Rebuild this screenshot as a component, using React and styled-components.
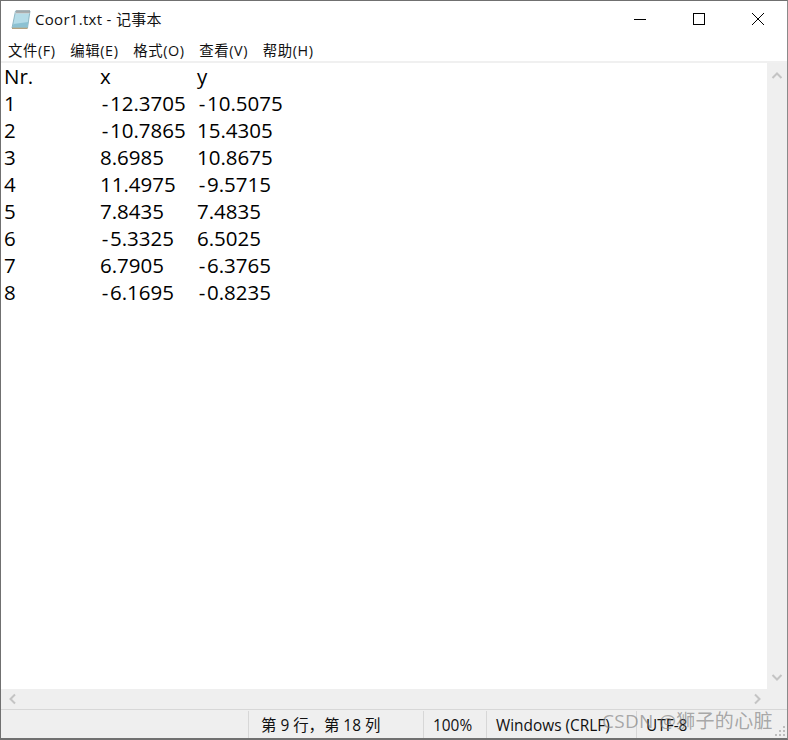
import React from 'react';
import styled, { createGlobalStyle } from 'styled-components';

const GlobalStyle = createGlobalStyle`
  html, body {
    margin: 0;
    padding: 0;
    background: #fff;
  }
`;

const UI_FONT = `"Open Sans", "Noto Sans CJK SC", sans-serif`;

const Win = styled.div`
  width: 788px;
  height: 740px;
  box-sizing: border-box;
  border-top: 1px solid #707070;
  border-left: 1px solid #707070;
  border-right: 1px solid #8a8a8a;
  border-bottom: 2px solid #707070;
  display: flex;
  flex-direction: column;
  background: #fff;
  font-family: ${UI_FONT};
  position: relative;
  overflow: hidden;
`;

const TitleBar = styled.div`
  height: 37px;
  display: flex;
  align-items: center;
  padding: 0 0 2px 10px;
  box-sizing: border-box;
  flex: none;
`;

const Title = styled.div`
  margin-left: 4px;
  font-size: 15px;
  letter-spacing: 0.3px;
  color: #111;
  flex: 1;
`;

const WinButton = styled.div`
  width: 59px;
  height: 35px;
  display: flex;
  align-items: center;
  justify-content: center;
`;

const MenuBar = styled.div`
  height: 25px;
  display: flex;
  align-items: center;
  padding-left: 7px;
  box-sizing: border-box;
  gap: 14.6px;
  flex: none;
  border-bottom: 2px solid #f0f0f0;
`;

const MenuItem = styled.span`
  font-size: 14.4px;
  letter-spacing: 0.6px;
  color: #111;
`;

const Middle = styled.div`
  flex: 1;
  display: flex;
  min-height: 0;
`;

const Editor = styled.div`
  flex: 1;
  padding: 0 0 0 3px;
  font-size: 20.5px;
  color: #000;
`;

const Row = styled.div`
  display: grid;
  grid-template-columns: 96px 97px auto;
  height: 27px;
  line-height: 27px;
  white-space: pre;
`;

const Minus = styled.span`
  display: inline-block;
  width: 10px;
  text-align: center;
`;

const VScroll = styled.div`
  width: 20px;
  background: #efefef;
  display: flex;
  flex-direction: column;
  justify-content: space-between;
  align-items: center;
  padding: 7px 0 6px;
  flex: none;
`;

const HScroll = styled.div`
  height: 20px;
  background: #efefef;
  display: flex;
  justify-content: space-between;
  align-items: center;
  padding: 0 24px 0 6px;
  flex: none;
`;

const StatusBar = styled.div`
  height: 27px;
  background: #efefef;
  border-top: 1px solid #d7d7d7;
  display: flex;
  flex: none;
  font-size: 15.4px;
  color: #111;
  padding-top: 1px;
`;

const StatusCell = styled.div`
  width: ${p => p.$w}px;
  box-sizing: border-box;
  border-left: ${p => (p.$first ? 'none' : '1px solid #d7d7d7')};
  padding-left: ${p => p.$pad || 9}px;
  line-height: 30px;
  white-space: pre;
  overflow: hidden;
`;

const Grip = styled.svg`
  position: absolute;
  right: 1px;
  bottom: 1px;
`;

const Watermark = styled.div`
  position: absolute;
  left: 601px;
  top: 705px;
  font-size: 19px;
  color: rgba(120, 120, 120, 0.62);
  white-space: pre;
  letter-spacing: 0.3px;
`;

const Chevron = ({ d }) => (
  <svg width="12" height="12" viewBox="0 0 12 12">
    <path d={d} fill="none" stroke="#c4c4c4" strokeWidth="2" />
  </svg>
);

const NotepadIcon = () => (
  <svg width="20" height="20" viewBox="0 0 20 20">
    <path d="M4.5 2 L19 2 L16.5 19 L1 19 Z" fill="#b5dce8" stroke="#7ba8b8" strokeWidth="0.8" />
    <path d="M2.5 15 L17.3 13 L16.5 18.6 L1.5 18.6 Z" fill="#8cc1d2" />
    <path d="M1 19.3 L16.5 19.3" stroke="#b39b74" strokeWidth="1.2" />
    <path d="M4.6 2.4 L18.9 2.4 L18.5 4.6 L4.3 4.6 Z" fill="#d0d0d0" />
    <path d="M6 1 V4 M8 1 V4 M10 1 V4 M12 1 V4 M14 1 V4 M16 1 V4 M18 1 V4" stroke="#7a7a7a" strokeWidth="0.8" />
  </svg>
);

const rows = [
  ['Nr.', 'x', 'y'],
  ['1', '-12.3705', '-10.5075'],
  ['2', '-10.7865', '15.4305'],
  ['3', '8.6985', '10.8675'],
  ['4', '11.4975', '-9.5715'],
  ['5', '7.8435', '7.4835'],
  ['6', '-5.3325', '6.5025'],
  ['7', '6.7905', '-6.3765'],
  ['8', '-6.1695', '-0.8235'],
];

const menus = ['文件(F)', '编辑(E)', '格式(O)', '查看(V)', '帮助(H)'];

// the hyphen in the reference font is short with a wide advance
const Value = ({ text }) =>
  text.startsWith('-') ? (
    <span>
      <Minus>-</Minus>
      {text.slice(1)}
    </span>
  ) : (
    <span>{text}</span>
  );

const App = () => (
  <>
    <GlobalStyle />
    <Win>
      <TitleBar>
        <NotepadIcon />
        <Title>Coor1.txt - 记事本</Title>
        <WinButton>
          <svg width="14" height="14" viewBox="0 0 14 14">
            <path d="M1 7.5 H13" stroke="#000" strokeWidth="1" />
          </svg>
        </WinButton>
        <WinButton>
          <svg width="14" height="14" viewBox="0 0 14 14">
            <rect x="1.5" y="1.5" width="11" height="11" fill="none" stroke="#000" strokeWidth="1" />
          </svg>
        </WinButton>
        <WinButton>
          <svg width="14" height="14" viewBox="0 0 14 14">
            <path d="M1 1 L13 13 M13 1 L1 13" stroke="#000" strokeWidth="1" />
          </svg>
        </WinButton>
      </TitleBar>
      <MenuBar>
        {menus.map(m => (
          <MenuItem key={m}>{m}</MenuItem>
        ))}
      </MenuBar>
      <Middle>
        <Editor>
          {rows.map(r => (
            <Row key={r[0]}>
              <span>{r[0]}</span>
              <Value text={r[1]} />
              <Value text={r[2]} />
            </Row>
          ))}
        </Editor>
        <VScroll>
          <Chevron d="M1.5 8 L6 3.5 L10.5 8" />
          <Chevron d="M1.5 4 L6 8.5 L10.5 4" />
        </VScroll>
      </Middle>
      <HScroll>
        <Chevron d="M8 1.5 L3.5 6 L8 10.5" />
        <Chevron d="M4 1.5 L8.5 6 L4 10.5" />
      </HScroll>
      <StatusBar>
        <StatusCell $first $w={247} />
        <StatusCell $w={175} $pad={12}>第 9 行，第 18 列</StatusCell>
        <StatusCell $w={63}>100%</StatusCell>
        <StatusCell $w={150}>Windows (CRLF)</StatusCell>
        <StatusCell $w={150}>UTF-8</StatusCell>
      </StatusBar>
      <Grip width="12" height="12" viewBox="0 0 12 12">
        <path d="M9 1h2v2H9z M5 5h2v2H5z M9 5h2v2H9z M1 9h2v2H1z M5 9h2v2H5z M9 9h2v2H9z" fill="#bdbdbd" />
      </Grip>
      <Watermark>CSDN @狮子的心脏</Watermark>
    </Win>
  </>
);

export default App;
